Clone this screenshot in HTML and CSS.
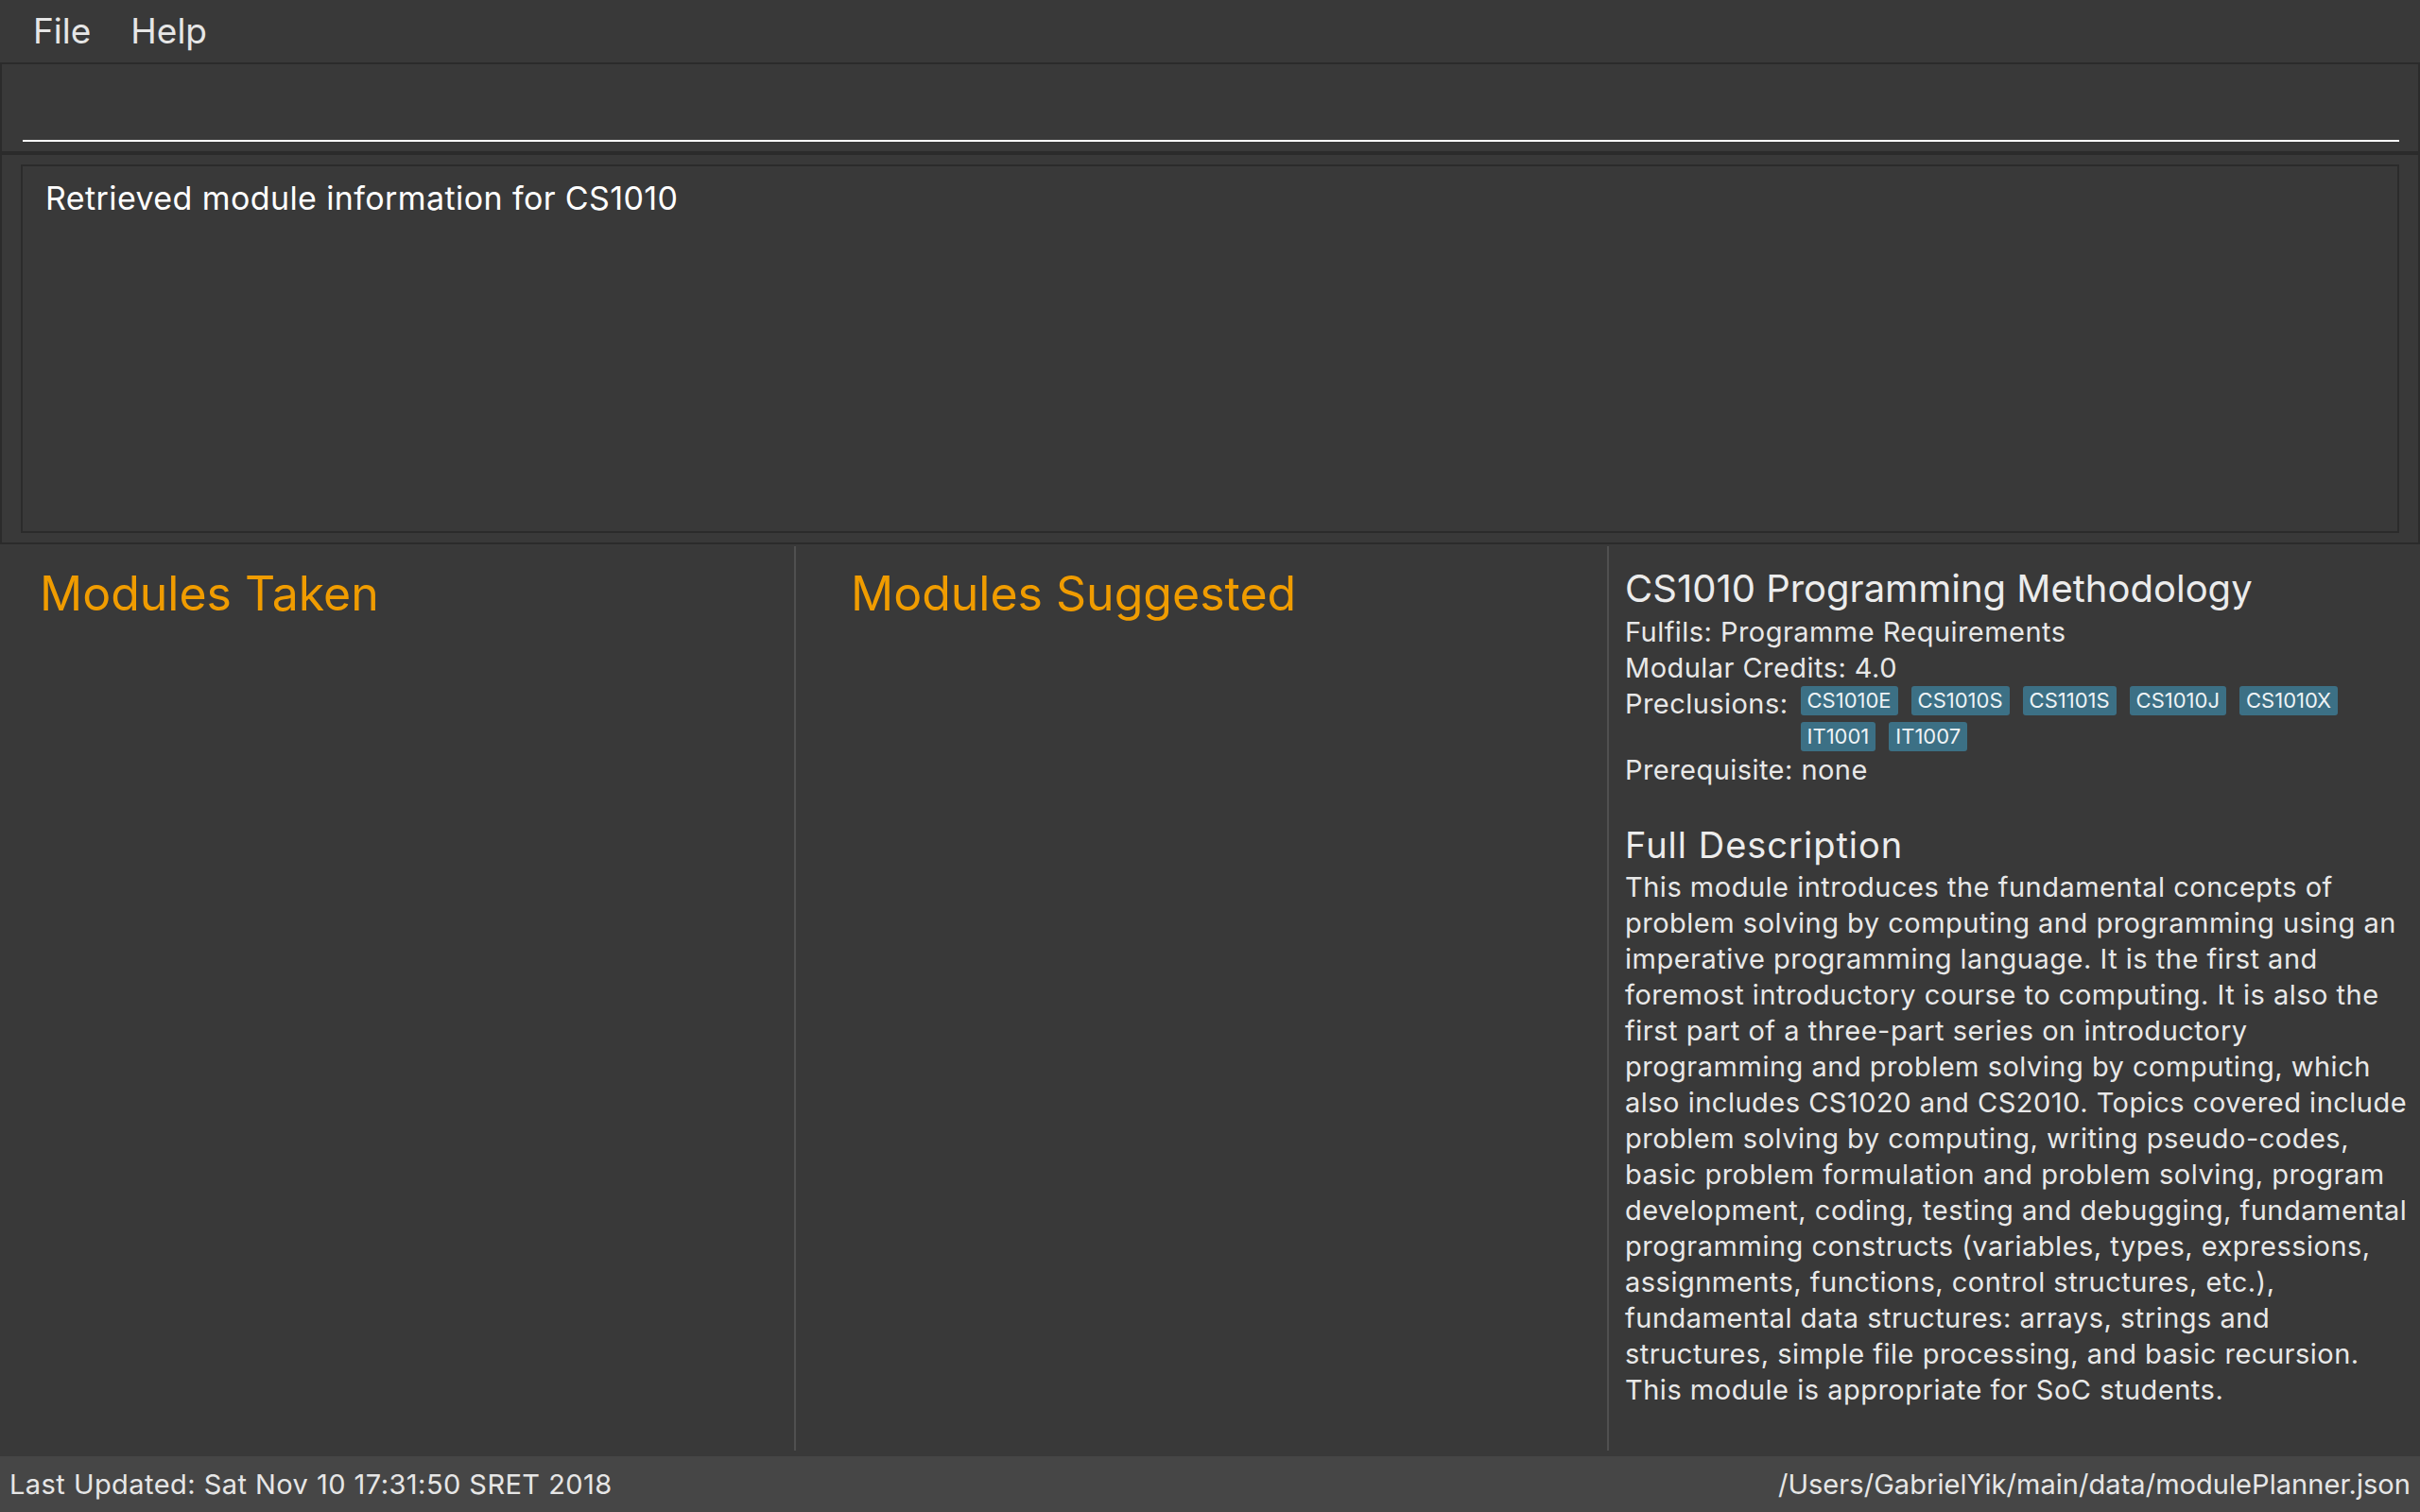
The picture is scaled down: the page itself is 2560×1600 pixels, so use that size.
FILE: index.html
```html
<!DOCTYPE html>
<html lang="en">
<head>
<meta charset="utf-8">
<title>Module Planner</title>
<link rel="stylesheet" href="styles.css">
</head>
<body>
<div class="app">
  <nav class="menubar">
    <span class="menu-item">File</span>
    <span class="menu-item">Help</span>
  </nav>

  <div class="command">
    <div class="command-input"></div>
  </div>

  <div class="result">
    <div class="result-box">Retrieved module information for CS1010</div>
  </div>

  <main class="panels">
    <section class="panel taken">
      <h2 class="panel-heading">Modules Taken</h2>
    </section>
    <section class="panel suggested">
      <h2 class="panel-heading">Modules Suggested</h2>
    </section>
    <section class="panel detail">
      <h1 class="module-title">CS1010 Programming Methodology</h1>
      <div class="info-line">Fulfils: Programme Requirements</div>
      <div class="info-line">Modular Credits: 4.0</div>
      <div class="info-row">
        <span class="info-label">Preclusions:</span>
        <div class="tags">
          <span class="tag">CS1010E</span>
          <span class="tag">CS1010S</span>
          <span class="tag">CS1101S</span>
          <span class="tag">CS1010J</span>
          <span class="tag">CS1010X</span>
          <span class="tag">IT1001</span>
          <span class="tag">IT1007</span>
        </div>
      </div>
      <div class="info-line">Prerequisite: none</div>
      <h3 class="desc-heading">Full Description</h3>
      <p class="desc">This module introduces the fundamental concepts of<br>problem solving by computing and programming using an<br>imperative programming language. It is the first and<br>foremost introductory course to computing. It is also the<br>first part of a three-part series on introductory<br>programming and problem solving by computing, which<br>also includes CS1020 and CS2010. Topics covered include<br>problem solving by computing, writing pseudo-codes,<br>basic problem formulation and problem solving, program<br>development, coding, testing and debugging, fundamental<br>programming constructs (variables, types, expressions,<br>assignments, functions, control structures, etc.),<br>fundamental data structures: arrays, strings and<br>structures, simple file processing, and basic recursion.<br>This module is appropriate for SoC students.</p>
    </section>
  </main>

  <footer class="status">
    <span class="status-left">Last Updated: Sat Nov 10 17:31:50 SRET 2018</span>
    <span class="status-right">/Users/GabrielYik/main/data/modulePlanner.json</span>
  </footer>
</div>
</body>
</html>
```

FILE: styles.css
```css
* {
  box-sizing: border-box;
}

html, body {
  margin: 0;
  padding: 0;
  background: #393939;
}

body {
  font-family: Inter, "Noto Sans", sans-serif;
  color: #e8e8e8;
}

.app {
  width: 2560px;
  height: 1600px;
  display: flex;
  flex-direction: column;
  overflow: hidden;
}

/* Menu bar */
.menubar {
  height: 68px;
  flex: none;
  display: flex;
  align-items: center;
  gap: 42px;
  padding: 0 0 2px 35px;
  border-bottom: 2px solid #2b2b2b;
  font-size: 37px;
  color: #e6e6e6;
}

/* Command box */
.command {
  height: 96px;
  flex: none;
  display: flex;
  align-items: flex-end;
  padding: 0 20px 10px 22px;
  border: 2px solid #2b2b2b;
  border-top: 0;
  border-bottom-width: 4px;
}

.command-input {
  flex: 1;
  height: 40px;
  border-bottom: 2px solid #ffffff;
}

/* Result display */
.result {
  height: 412px;
  flex: none;
  padding: 10px 20px 10px 20px;
  border: 2px solid #2b2b2b;
  border-top: 0;
}

.result-box {
  height: 100%;
  border: 2px solid #2b2b2b;
  padding: 14px 24px;
  font-size: 34px;
  letter-spacing: 0.4px;
  line-height: 40px;
  color: #ffffff;
}

/* Panels */
.panels {
  flex: 1;
  display: grid;
  grid-template-columns: 840px 860px 1fr;
  padding: 2px 0 6px;
  min-height: 0;
}

.panel {
  min-width: 0;
}

.suggested,
.detail {
  border-left: 2px solid #505050;
}

.panel-heading {
  margin: 0;
  font-weight: 400;
  font-size: 50px;
  line-height: 62px;
  color: #f09c00;
}

.taken {
  padding: 19px 0 0 42px;
}

.suggested {
  padding: 19px 0 0 58px;
}

.detail {
  padding: 18px 0 0 17px;
}

.module-title {
  margin: 0;
  font-weight: 400;
  font-size: 40px;
  line-height: 54px;
  color: #ececec;
}

.info-line,
.info-label {
  font-size: 29px;
  letter-spacing: 0.45px;
  line-height: 38px;
}

.info-row {
  display: flex;
  align-items: flex-start;
  gap: 13px;
}

.info-label {
  flex: none;
}

.tags {
  display: flex;
  flex-wrap: wrap;
  gap: 7px 14px;
  padding-bottom: 1px;
}

.tag {
  height: 31px;
  line-height: 31px;
  padding: 0 7px;
  border-radius: 3px;
  background: #3c7085;
  color: #eef3f5;
  font-size: 22px;
}

.desc-heading {
  margin: 35px 0 0;
  font-weight: 400;
  font-size: 38px;
  letter-spacing: 1px;
  line-height: 51px;
  color: #ececec;
}

.desc {
  margin: 0;
  font-size: 29px;
  letter-spacing: 0.5px;
  line-height: 38px;
  white-space: nowrap;
}

/* Status bar */
.status {
  height: 59px;
  flex: none;
  display: flex;
  align-items: center;
  justify-content: space-between;
  padding: 0 10px;
  background: #464646;
  font-size: 29px;
  color: #e6e6e6;
}

.status-left {
  letter-spacing: 0.45px;
}

.status-right {
  letter-spacing: 0.05px;
}
```
